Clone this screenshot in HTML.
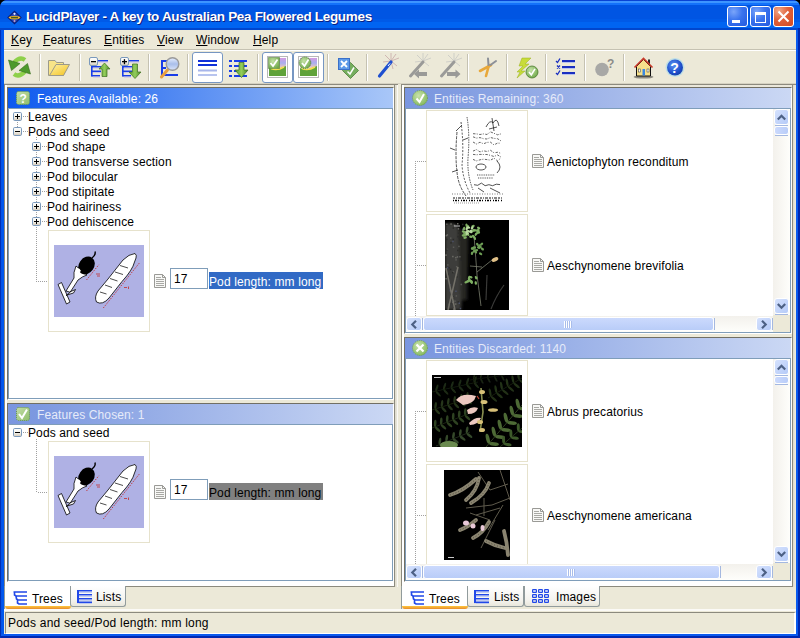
<!DOCTYPE html>
<html><head><meta charset="utf-8">
<style>
*{margin:0;padding:0;box-sizing:border-box}
html,body{width:800px;height:638px;overflow:hidden;background:#000}
body{position:relative;font-family:"Liberation Sans",sans-serif;font-size:12px;color:#000}
.a{position:absolute}
.t{position:absolute;white-space:nowrap;line-height:14px}
/* window */
#win{left:0;top:0;width:800px;height:638px;background:linear-gradient(to right,#0031C6 0,#0A4FE0 1px,#0058EE 2px,#0058EE 797px,#003DD7 799px);border-radius:8px 8px 0 0}
#title{left:0;top:0;width:800px;height:30px;border-radius:7px 7px 0 0;
 background:linear-gradient(to bottom,#0843D4 0,#0843D4 1px,#3D95FF 1px,#3D95FF 3px,#1372FA 3px,#1372FA 5px,#0055E3 5px,#0055E3 19px,#005AE8 19px,#005AE8 22px,#0064F2 22px,#0064F2 28px,#0046CE 28px)}
#client{left:4px;top:30px;width:792px;height:604px;background:#ECE9D8}
.ttl{left:26px;top:10px;font-size:13.5px;font-weight:bold;color:#fff;text-shadow:1px 1px 0 #0A1F80;letter-spacing:-0.32px}
.menu{top:33px;font-size:12px}
.menu u{text-decoration:underline;text-decoration-thickness:1px;text-underline-offset:1px}
.tr,.hdr .t,.tab,.menu{letter-spacing:.12px}
.stat{letter-spacing:.22px}
.sep{position:absolute;top:54px;width:1px;height:27px;background:#C5C2B2;box-shadow:1px 0 0 #fff}
.pbtn{position:absolute;top:52px;height:31px;border:1px solid #7696C2;border-radius:3px;background:#fff}
.wb{position:absolute;top:6px;width:21px;height:21px;border:1px solid #fff;border-radius:3px}
/* panels */
.hdr{position:absolute;height:20px;color:#fff;font-size:12px}
.hdr .t{top:4px;left:29px}
.hdr.ina .t{color:#E6EBF9}
.cont{position:absolute;background:#fff;border:1px solid #7F9DB9;}
.exp{position:absolute;width:9px;height:9px;border:1px solid #7A99BC;border-radius:2px;background:linear-gradient(#fff 0,#F4F3EE 50%,#C8C6B8 100%)}
.exp:before{content:"";position:absolute;left:1px;top:3px;width:5px;height:1px;background:#000}
.exp.p:after{content:"";position:absolute;left:3px;top:1px;width:1px;height:5px;background:#000}
.hd{position:absolute;height:1px;border-top:1px dotted #999}
.vd{position:absolute;width:1px;border-left:1px dotted #999}
</style></head><body>
<div id="win" class="a"></div>
<div id="title" class="a"></div>
<div id="client" class="a"></div>
<div class="t ttl">LucidPlayer - A key to Australian Pea Flowered Legumes</div>

<!-- menu -->
<div class="t menu" style="left:11px"><u>K</u>ey</div>
<div class="t menu" style="left:43px"><u>F</u>eatures</div>
<div class="t menu" style="left:104px"><u>E</u>ntities</div>
<div class="t menu" style="left:157px"><u>V</u>iew</div>
<div class="t menu" style="left:196px"><u>W</u>indow</div>
<div class="t menu" style="left:253px"><u>H</u>elp</div>
<div class="a" style="left:4px;top:49px;width:792px;height:1px;background:#C5C2B2"></div>
<div class="a" style="left:4px;top:50px;width:792px;height:1px;background:#fff"></div>
<div class="a" style="left:4px;top:83px;width:792px;height:1px;background:#D6D2C2"></div>

<!-- toolbar separators -->
<div class="sep" style="left:39px"></div>
<div class="sep" style="left:79px"></div>
<div class="sep" style="left:148px"></div>
<div class="sep" style="left:187px"></div>
<div class="sep" style="left:257px"></div>
<div class="sep" style="left:327px"></div>
<div class="sep" style="left:366px"></div>
<div class="sep" style="left:467px"></div>
<div class="sep" style="left:506px"></div>
<div class="sep" style="left:545px"></div>
<div class="sep" style="left:584px"></div>
<div class="sep" style="left:623px"></div>
<div class="pbtn" style="left:192px;width:31px"></div>
<div class="pbtn" style="left:262px;width:31px"></div>
<div class="pbtn" style="left:293px;width:31px"></div>

<svg class="a" style="left:0;top:0" width="800" height="90" viewBox="0 0 800 90">
<defs>
 <linearGradient id="gfold" x1="0" y1="0" x2="1" y2="1"><stop offset="0" stop-color="#FFF2A8"/><stop offset="1" stop-color="#F3C21C"/></linearGradient>
 <linearGradient id="glens" x1="0" y1="0" x2="0" y2="1"><stop offset="0" stop-color="#E8F0FF"/><stop offset=".5" stop-color="#A9BEEA"/><stop offset="1" stop-color="#DCE6FA"/></linearGradient>
 <radialGradient id="ghelp" cx=".4" cy=".35" r=".7"><stop offset="0" stop-color="#5C93F2"/><stop offset=".7" stop-color="#1E4FCB"/><stop offset="1" stop-color="#173FA8"/></radialGradient>
 <linearGradient id="gsky" x1="0" y1="0" x2="0" y2="1"><stop offset="0" stop-color="#D49BE0"/><stop offset=".5" stop-color="#A8AEF0"/><stop offset="1" stop-color="#F0C8B8"/></linearGradient>
 <radialGradient id="gchk" cx=".4" cy=".35" r=".7"><stop offset="0" stop-color="#C6E3A6"/><stop offset="1" stop-color="#6FA84A"/></radialGradient>
</defs>
<!-- refresh -->
<path d="M25,60 Q20,56 14,62.5" stroke="#8ED04A" stroke-width="4.2" fill="none"/>
<path d="M8.5,60 L20,63.5 L11.5,70.5 Z" fill="#4E9A2C" stroke="#356E1E" stroke-width=".6"/>
<path d="M14,74 Q19,78 25,71.5" stroke="#8ED04A" stroke-width="4.2" fill="none"/>
<path d="M30.5,74 L19,70.5 L27.5,63.5 Z" fill="#4E9A2C" stroke="#356E1E" stroke-width=".6"/>
<!-- folder -->
<path d="M48.5,75.5 L48.5,60.5 L55,60.5 L56.5,62.5 L63.5,62.5 L63.5,75.5 Z" fill="#F8E488" stroke="#9C9A8A" stroke-width="1"/>
<path d="M56,64.5 L69.5,64.5 L63.5,75.5 L49.5,75.5 Z" fill="url(#gfold)" stroke="#9C9A8A" stroke-width="1"/>
<!-- collapse -->
<defs><linearGradient id="garr" x1="0" y1="0" x2="1" y2="0"><stop offset="0" stop-color="#5E9E34"/><stop offset=".5" stop-color="#92CC5A"/><stop offset="1" stop-color="#4E8A2A"/></linearGradient></defs>
<g fill="#1A3EE8"><rect x="98" y="60" width="10" height="1.6"/><rect x="91" y="66" width="1.6" height="10"/><rect x="91" y="66" width="10" height="1.6"/><rect x="91" y="70.5" width="10" height="1.6"/><rect x="91" y="75" width="9" height="1.6"/></g><g fill="#C9C2E6"><rect x="98" y="61.6" width="10" height="1"/><rect x="93" y="67.6" width="8" height="1"/><rect x="93" y="72.1" width="8" height="1"/><rect x="93" y="76.6" width="7" height="1"/></g>
<rect x="89.5" y="57.5" width="8" height="8" rx="1.5" fill="url(#gexp)" stroke="#7A99BC"/>
<rect x="91" y="61" width="5" height="1.3" fill="#000"/>
<path d="M99,69 L104.5,63 L110,69 L107,69 L107,76.5 L102,76.5 L102,69 Z" fill="url(#garr)" stroke="#3C6E20" stroke-width=".7"/>
<!-- expand -->
<g fill="#1A3EE8"><rect x="129" y="60" width="10" height="1.6"/><rect x="122" y="66" width="1.6" height="10"/><rect x="122" y="66" width="10" height="1.6"/><rect x="122" y="70.5" width="10" height="1.6"/><rect x="122" y="75" width="9" height="1.6"/></g><g fill="#C9C2E6"><rect x="129" y="61.6" width="10" height="1"/><rect x="124" y="67.6" width="8" height="1"/><rect x="124" y="72.1" width="8" height="1"/><rect x="124" y="76.6" width="7" height="1"/></g>
<rect x="120.5" y="57.5" width="8" height="8" rx="1.5" fill="url(#gexp)" stroke="#7A99BC"/>
<rect x="122" y="61" width="5" height="1.3" fill="#000"/><rect x="123.8" y="59.2" width="1.3" height="5" fill="#000"/>
<path d="M132.5,64 L137.5,64 L137.5,72 L141,72 L135,78.5 L129,72 L132.5,72 Z" fill="url(#garr)" stroke="#3C6E20" stroke-width=".7"/>
<!-- search -->
<g fill="#1A3EE8"><rect x="161" y="60" width="2" height="16"/><rect x="161" y="60" width="7" height="2"/><rect x="161" y="67" width="5" height="2"/><rect x="161" y="74" width="17" height="2"/></g>
<line x1="161.5" y1="77" x2="167.5" y2="70" stroke="#E8A040" stroke-width="3" stroke-linecap="round"/>
<circle cx="172.5" cy="64" r="6.3" fill="url(#glens)" stroke="#9A9A9A" stroke-width="1.4"/>
<!-- lines icon (pressed) -->
<rect x="198" y="60" width="19" height="2" fill="#1030D8"/><rect x="198" y="64" width="19" height="2" fill="#1030D8"/>
<rect x="198" y="69.5" width="19" height="2" fill="#A8B6EA"/><rect x="198" y="74" width="19" height="2" fill="#B8C4EE"/>
<!-- dotted list with arrow -->
<g fill="#1A3EE8">
<rect x="229" y="60" width="3" height="2"/><rect x="234" y="60" width="13" height="2"/>
<rect x="229" y="65" width="3" height="2"/><rect x="234" y="65" width="13" height="2"/>
<rect x="229" y="70" width="3" height="2"/><rect x="234" y="70" width="13" height="2"/>
<rect x="229" y="75" width="3" height="2"/><rect x="234" y="75" width="13" height="2"/>
</g>
<path d="M239,62.5 L244,62.5 L244,70 L248,70 L241.5,77.5 L235,70 L239,70 Z" fill="url(#garr)" stroke="#3C6E20" stroke-width=".7"/>
<!-- image check 1 -->
<rect x="267.5" y="56.5" width="20" height="21" fill="#fff" stroke="#B8B8B8"/>
<rect x="269" y="58" width="17" height="10" fill="url(#gsky)"/>
<path d="M269,68 Q276,71 286,66 L286,76 L269,76 Z" fill="#5FA23A"/>
<path d="M271,68.5 Q277,71 284,67" stroke="#F5E050" stroke-width="1.6" fill="none"/>
<rect x="268.5" y="57.5" width="11" height="11" fill="url(#gchk)" stroke="#4C7A30" stroke-width="1" stroke-dasharray="1 1"/>
<path d="M270.5,63 L273,66 L277.5,59.5" stroke="#fff" stroke-width="1.8" fill="none"/>
<!-- image check 2 -->
<rect x="298.5" y="56.5" width="20" height="21" fill="#fff" stroke="#B8B8B8"/>
<rect x="300" y="58" width="17" height="10" fill="url(#gsky)"/>
<path d="M300,68 Q307,71 317,66 L317,76 L300,76 Z" fill="#5FA23A"/>
<path d="M302,68.5 Q308,71 315,67" stroke="#F5E050" stroke-width="1.6" fill="none"/>
<circle cx="305" cy="62.8" r="5.8" fill="url(#gchk)" stroke="#4C7A30" stroke-width="1" stroke-dasharray="1 1"/>
<path d="M302,63 L304.5,66 L308.5,59.5" stroke="#fff" stroke-width="1.8" fill="none"/>
<!-- swap -->
<path d="M350.5,62.5 L358.5,70.5 L350.5,78.5 L342.5,70.5 Z" fill="#76AE5E" stroke="#4E7E3A" stroke-width=".8"/>
<path d="M347.5,71.5 L350,74 L354,67.5" stroke="#fff" stroke-width="1.5" fill="none"/>
<rect x="338.5" y="58.5" width="11" height="11" fill="#5D9AE8" stroke="#3A70C8"/>
<path d="M341,61 L347,67 M347,61 L341,67" stroke="#fff" stroke-width="1.8"/>
<!-- wand -->
<g stroke="#C8A8A8" stroke-width=".8"><path d="M391,61 L399,58 M391,61 L397,66 M391,61 L393,69 M391,61 L385,55 M391,61 L391,53 M391,61 L396,54 M391,61 L383,62"/></g>
<line x1="379.5" y1="76" x2="391" y2="62" stroke="#1F50D0" stroke-width="3.2" stroke-linecap="round"/>
<line x1="388" y1="66" x2="390" y2="63.5" stroke="#fff" stroke-width="1"/>
<!-- gray wand left -->
<g stroke="#C8C8C4" stroke-width=".8"><path d="M423,61 L431,58 M423,61 L429,66 M423,61 L417,55 M423,61 L423,53 M423,61 L428,54 M423,61 L415,62"/></g>
<line x1="410.5" y1="76" x2="423" y2="62" stroke="#9A9A98" stroke-width="3" stroke-linecap="round"/>
<path d="M414,74 L419,69.5 L419,72 L427,72 L427,76 L419,76 L419,78.5 Z" fill="#9A9A98"/>
<!-- gray wand right -->
<g stroke="#C8C8C4" stroke-width=".8"><path d="M454,61 L462,58 M454,61 L460,66 M454,61 L448,55 M454,61 L454,53 M454,61 L459,54 M454,61 L446,62"/></g>
<line x1="441.5" y1="76" x2="454" y2="62" stroke="#9A9A98" stroke-width="3" stroke-linecap="round"/>
<path d="M460.5,74 L455.5,69.5 L455.5,72 L447,72 L447,76 L455.5,76 L455.5,78.5 Z" fill="#9A9A98"/>
<!-- pliers -->
<path d="M480,71 L491,65" stroke="#E8A83A" stroke-width="2.6" stroke-linecap="round"/>
<path d="M486,76 L489,65" stroke="#E8A83A" stroke-width="2.6" stroke-linecap="round"/>
<path d="M488.5,65 L488,58.5 M490.5,65 L496,61" stroke="#8C9098" stroke-width="2" stroke-linecap="round"/>
<!-- lightning -->
<path d="M522,58 L531,58 L525,64 L529,64 L521,71 L525,71 L517,78 L520,72 L517,72 L523,66 L519,66 Z" fill="#C8DC3A" stroke="#9AB020" stroke-width=".5"/>
<circle cx="532" cy="72" r="6" fill="url(#gchk)" stroke="#4C7A30" stroke-width=".8"/>
<path d="M529,72 L531.3,74.8 L535,68.8" stroke="#fff" stroke-width="1.6" fill="none"/>
<!-- checklist -->
<g stroke="#1A2FC0" stroke-width="1.3" fill="none"><path d="M556,61 L557.5,62.5 L560,58.5"/><path d="M556,73 L557.5,74.5 L560,70.5"/><path d="M557,65.5 L560,68.5 M560,65.5 L557,68.5"/></g>
<g fill="#1A2FC0"><rect x="562" y="60" width="13" height="2"/><rect x="562" y="66" width="13" height="2"/><rect x="562" y="72" width="13" height="2"/></g>
<g fill="#B8C2EE"><rect x="562" y="62" width="13" height="1"/><rect x="562" y="68" width="13" height="1"/><rect x="562" y="74" width="13" height="1"/></g>
<!-- gray ball -->
<circle cx="602" cy="69.5" r="6.8" fill="#A8A8A6"/>
<text x="607" y="67.5" font-family="Liberation Sans" font-weight="bold" font-size="12" fill="#8C8C8A">?</text>
<!-- house -->
<ellipse cx="643.5" cy="77" rx="10" ry="1.6" fill="#8C8A80"/>
<rect x="648" y="59.5" width="2" height="5" fill="#222"/>
<path d="M636.5,66.5 L643.5,59.5 L650.5,66.5 L650.5,76 L636.5,76 Z" fill="#F6E08C" stroke="#111" stroke-width="1"/>
<path d="M634.5,67.5 L643.5,58.5 L652.5,67.5" stroke="#C83A2A" stroke-width="1.6" fill="none"/>
<rect x="642.5" y="69" width="2.5" height="6.5" fill="#3A88E0"/>
<rect x="638.5" y="69" width="2" height="3" fill="#fff" stroke="#333" stroke-width=".5"/>
<rect x="647" y="69" width="2" height="3" fill="#fff" stroke="#333" stroke-width=".5"/>
<!-- help -->
<circle cx="675" cy="67.5" r="9.5" fill="#BFE0E6"/>
<circle cx="675" cy="67.5" r="8" fill="url(#ghelp)"/>
<text x="670.2" y="73" font-family="Liberation Sans" font-weight="bold" font-size="14" fill="#fff">?</text>
</svg>

<!-- window buttons -->
<div class="wb" style="left:727px;background:radial-gradient(circle at 30% 25%,#7AA5FA,#3A73EE 45%,#2259DE 100%)"></div>
<div class="a" style="left:732px;top:20px;width:8px;height:3px;background:#fff"></div>
<div class="wb" style="left:750px;background:radial-gradient(circle at 30% 25%,#7AA5FA,#3A73EE 45%,#2259DE 100%)"></div>
<div class="a" style="left:755px;top:12px;width:11px;height:11px;border:1px solid #fff;border-top-width:3px"></div>
<div class="wb" style="left:773px;background:radial-gradient(circle at 25% 20%,#F0A888,#E0603A 45%,#D24A22 100%)"></div>
<svg class="a" style="left:773px;top:6px" width="21" height="21" viewBox="0 0 21 21"><path d="M5.5,5.5 L15.5,15.5 M15.5,5.5 L5.5,15.5" stroke="#fff" stroke-width="2"/></svg>
<svg class="a" style="left:6px;top:9px" width="18" height="18" viewBox="0 0 18 18">
<path d="M8.5,1.5 L15.8,8.5 L8.5,15.5 L1.2,8.5 Z" fill="#0A1E78"/>
<path d="M8.5,3 L14,8.5 L8.5,14 L3,8.5 Z" fill="#2442B8"/>
<path d="M2.5,8.5 Q4,6.8 8.5,6.8 Q13,6.8 14.5,8.5 Q13,10.4 8.5,10.4 Q4,10.4 2.5,8.5 Z" fill="#F4B82A"/>
<rect x="5" y="7.8" width="7" height="1.6" fill="#4A5A20"/>
<circle cx="8.5" cy="4.8" r="1.1" fill="#E8E8FF"/>
<circle cx="8.5" cy="12" r="1" fill="#C8A0C0"/>
</svg>

<!-- PANEL FRAMES -->
<div class="a" style="left:4px;top:84px;width:391px;height:503px;border:1px solid #8C8A7E;background:#fff"></div>
<div class="a" style="left:7px;top:85px;width:387px;height:2px;background:#EAE7DA"></div>
<div class="a" style="left:395px;top:84px;width:3px;height:1px;background:#8C8A7E"></div>
<div class="a" style="left:395px;top:85px;width:2px;height:502px;background:linear-gradient(to right,#DDDACB,#E9E7DB)"></div>
<div class="a" style="left:397px;top:85px;width:1px;height:502px;background:#FAF9F4"></div>
<div class="a" style="left:401px;top:84px;width:392px;height:503px;border:1px solid #8C8A7E;background:#fff"></div>
<div class="a" style="left:404px;top:85px;width:388px;height:2px;background:#EAE7DA"></div>
<div class="a" style="left:793px;top:84px;width:3px;height:1px;background:#8C8A7E"></div>
<div class="a" style="left:793px;top:85px;width:2px;height:502px;background:linear-gradient(to right,#DDDACB,#E9E7DB)"></div>
<div class="a" style="left:7px;top:87px;width:387px;height:495px;background:#ECE9D8"></div>
<div class="a" style="left:404px;top:87px;width:388px;height:495px;background:#ECE9D8"></div>
<div class="a" style="left:7px;top:87px;width:387px;height:313px;border-left:1px solid #716F64;border-top:1px solid #716F64;border-right:1px solid #fff;border-bottom:1px solid #fff"></div>
<div class="hdr" style="left:8px;top:88px;width:385px;background:linear-gradient(to right,#0B58EE 0,#1A62EF 8%,#A9C7F8 100%)"><div class="t">Features Available: 26</div></div>
<div class="cont" style="left:8px;top:108px;width:385px;height:291px"></div>
<div class="a" style="left:7px;top:403px;width:387px;height:179px;border-left:1px solid #716F64;border-top:1px solid #716F64;border-right:1px solid #fff;border-bottom:1px solid #fff"></div>
<div class="hdr ina" style="left:8px;top:404px;width:385px;background:linear-gradient(to right,#7A96E0 0,#7D99E0 8%,#CBD8F4 100%)"><div class="t">Features Chosen: 1</div></div>
<div class="cont" style="left:8px;top:424px;width:385px;height:157px"></div>
<div class="a" style="left:404px;top:87px;width:388px;height:247px;border-left:1px solid #716F64;border-top:1px solid #716F64;border-right:1px solid #fff;border-bottom:1px solid #fff"></div>
<div class="hdr ina" style="left:405px;top:88px;width:386px;background:linear-gradient(to right,#7A96E0 0,#7D99E0 8%,#CBD8F4 100%)"><div class="t">Entities Remaining: 360</div></div>
<div class="cont" style="left:405px;top:108px;width:386px;height:225px"></div>
<div class="a" style="left:404px;top:337px;width:388px;height:245px;border-left:1px solid #716F64;border-top:1px solid #716F64;border-right:1px solid #fff;border-bottom:1px solid #fff"></div>
<div class="hdr ina" style="left:405px;top:338px;width:386px;background:linear-gradient(to right,#7A96E0 0,#7D99E0 8%,#CBD8F4 100%)"><div class="t">Entities Discarded: 1140</div></div>
<div class="cont" style="left:405px;top:358px;width:386px;height:223px"></div>
<!-- tab areas -->
<!-- TABS -->
<div class="a" style="left:4px;top:586px;width:1px;height:23px;background:#919B9C"></div>
<div class="a" style="left:401px;top:586px;width:1px;height:23px;background:#919B9C"></div>
<svg class="a" style="left:0;top:0" width="800" height="638" viewBox="0 0 800 638"><defs><linearGradient id="gexp" x1="0" y1="0" x2="0" y2="1"><stop offset="0" stop-color="#fff"/><stop offset=".55" stop-color="#F2F1EA"/><stop offset="1" stop-color="#D3C7B6"/></linearGradient><linearGradient id="hgq" x1="0" y1="0" x2="1" y2="1"><stop offset="0" stop-color="#C4DEA8"/><stop offset="1" stop-color="#8FBE6A"/></linearGradient><radialGradient id="hgc" cx=".4" cy=".35" r=".75"><stop offset="0" stop-color="#C8E2AA"/><stop offset=".8" stop-color="#8DBE68"/><stop offset="1" stop-color="#6EA448"/></radialGradient><linearGradient id="gsbv" x1="0" y1="0" x2="1" y2="0"><stop offset="0" stop-color="#F3F1EC"/><stop offset="1" stop-color="#FEFEFB"/></linearGradient><linearGradient id="gsbh" x1="0" y1="0" x2="0" y2="1"><stop offset="0" stop-color="#F3F1EC"/><stop offset="1" stop-color="#FEFEFB"/></linearGradient><linearGradient id="gbtn" x1="0" y1="0" x2="1" y2="1"><stop offset="0" stop-color="#D6E2FD"/><stop offset="1" stop-color="#B4CAF8"/></linearGradient><linearGradient id="gthh" x1="0" y1="0" x2="0" y2="1"><stop offset="0" stop-color="#CCDAFD"/><stop offset="1" stop-color="#B8CCF8"/></linearGradient><linearGradient id="gthv" x1="0" y1="0" x2="1" y2="0"><stop offset="0" stop-color="#CCDAFD"/><stop offset="1" stop-color="#B8CCF8"/></linearGradient></defs>
<rect x="16.5" y="91.5" width="13" height="13" rx="2" fill="url(#hgq)" stroke="#6D9A4A" stroke-dasharray="1 1"/><text x="19.5" y="102.5" font-family="Liberation Sans" font-weight="bold" font-size="12" fill="#fff">?</text><rect x="16.5" y="407.5" width="13" height="13" rx="2" fill="url(#hgq)" stroke="#6D9A4A" stroke-dasharray="1 1"/><path d="M19,414 L22,418 L27,409.5" stroke="#fff" stroke-width="2" fill="none"/><circle cx="420" cy="98" r="7.5" fill="url(#hgc)" stroke="#6D9A4A" stroke-width=".8" stroke-dasharray="1 1"/><path d="M416.5,98.5 L419.5,102 L424,94" stroke="#fff" stroke-width="2" fill="none"/><circle cx="420" cy="348" r="7.5" fill="url(#hgc)" stroke="#6D9A4A" stroke-width=".8" stroke-dasharray="1 1"/><path d="M416.5,344.5 L423.5,351.5 M423.5,344.5 L416.5,351.5" stroke="#fff" stroke-width="2.2"/>
<rect x="13.5" y="112.5" width="8" height="8" rx="1.2" fill="url(#gexp)" stroke="#7A99BC"/><rect x="15" y="116" width="5" height="1" fill="#000"/><rect x="17" y="114" width="1" height="5" fill="#000"/>
<rect x="13.5" y="127.5" width="8" height="8" rx="1.2" fill="url(#gexp)" stroke="#7A99BC"/><rect x="15" y="131" width="5" height="1" fill="#000"/>
<rect x="32.5" y="142.5" width="8" height="8" rx="1.2" fill="url(#gexp)" stroke="#7A99BC"/><rect x="34" y="146" width="5" height="1" fill="#000"/><rect x="36" y="144" width="1" height="5" fill="#000"/>
<rect x="32.5" y="157.5" width="8" height="8" rx="1.2" fill="url(#gexp)" stroke="#7A99BC"/><rect x="34" y="161" width="5" height="1" fill="#000"/><rect x="36" y="159" width="1" height="5" fill="#000"/>
<rect x="32.5" y="172.5" width="8" height="8" rx="1.2" fill="url(#gexp)" stroke="#7A99BC"/><rect x="34" y="176" width="5" height="1" fill="#000"/><rect x="36" y="174" width="1" height="5" fill="#000"/>
<rect x="32.5" y="187.5" width="8" height="8" rx="1.2" fill="url(#gexp)" stroke="#7A99BC"/><rect x="34" y="191" width="5" height="1" fill="#000"/><rect x="36" y="189" width="1" height="5" fill="#000"/>
<rect x="32.5" y="202.5" width="8" height="8" rx="1.2" fill="url(#gexp)" stroke="#7A99BC"/><rect x="34" y="206" width="5" height="1" fill="#000"/><rect x="36" y="204" width="1" height="5" fill="#000"/>
<rect x="32.5" y="217.5" width="8" height="8" rx="1.2" fill="url(#gexp)" stroke="#7A99BC"/><rect x="34" y="221" width="5" height="1" fill="#000"/><rect x="36" y="219" width="1" height="5" fill="#000"/>
<rect x="13.5" y="428.5" width="8" height="8" rx="1.2" fill="url(#gexp)" stroke="#7A99BC"/><rect x="15" y="432" width="5" height="1" fill="#000"/>
<g fill="#A0A0A0"><rect x="23" y="116" width="1" height="1"/><rect x="25" y="116" width="1" height="1"/><rect x="27" y="116" width="1" height="1"/><rect x="23" y="131" width="1" height="1"/><rect x="25" y="131" width="1" height="1"/><rect x="27" y="131" width="1" height="1"/><rect x="42" y="146" width="1" height="1"/><rect x="44" y="146" width="1" height="1"/><rect x="46" y="146" width="1" height="1"/><rect x="42" y="161" width="1" height="1"/><rect x="44" y="161" width="1" height="1"/><rect x="46" y="161" width="1" height="1"/><rect x="42" y="176" width="1" height="1"/><rect x="44" y="176" width="1" height="1"/><rect x="46" y="176" width="1" height="1"/><rect x="42" y="191" width="1" height="1"/><rect x="44" y="191" width="1" height="1"/><rect x="46" y="191" width="1" height="1"/><rect x="42" y="206" width="1" height="1"/><rect x="44" y="206" width="1" height="1"/><rect x="46" y="206" width="1" height="1"/><rect x="42" y="221" width="1" height="1"/><rect x="44" y="221" width="1" height="1"/><rect x="46" y="221" width="1" height="1"/><rect x="17" y="122" width="1" height="1"/><rect x="17" y="124" width="1" height="1"/><rect x="17" y="126" width="1" height="1"/><rect x="36" y="137" width="1" height="1"/><rect x="36" y="139" width="1" height="1"/><rect x="36" y="152" width="1" height="1"/><rect x="36" y="154" width="1" height="1"/><rect x="36" y="156" width="1" height="1"/><rect x="36" y="167" width="1" height="1"/><rect x="36" y="169" width="1" height="1"/><rect x="36" y="171" width="1" height="1"/><rect x="36" y="182" width="1" height="1"/><rect x="36" y="184" width="1" height="1"/><rect x="36" y="186" width="1" height="1"/><rect x="36" y="197" width="1" height="1"/><rect x="36" y="199" width="1" height="1"/><rect x="36" y="201" width="1" height="1"/><rect x="36" y="212" width="1" height="1"/><rect x="36" y="214" width="1" height="1"/><rect x="36" y="216" width="1" height="1"/><rect x="36" y="227" width="1" height="1"/><rect x="36" y="229" width="1" height="1"/><rect x="36" y="231" width="1" height="1"/><rect x="36" y="233" width="1" height="1"/><rect x="36" y="235" width="1" height="1"/><rect x="36" y="237" width="1" height="1"/><rect x="36" y="239" width="1" height="1"/><rect x="36" y="241" width="1" height="1"/><rect x="36" y="243" width="1" height="1"/><rect x="36" y="245" width="1" height="1"/><rect x="36" y="247" width="1" height="1"/><rect x="36" y="249" width="1" height="1"/><rect x="36" y="251" width="1" height="1"/><rect x="36" y="253" width="1" height="1"/><rect x="36" y="255" width="1" height="1"/><rect x="36" y="257" width="1" height="1"/><rect x="36" y="259" width="1" height="1"/><rect x="36" y="261" width="1" height="1"/><rect x="36" y="263" width="1" height="1"/><rect x="36" y="265" width="1" height="1"/><rect x="36" y="267" width="1" height="1"/><rect x="36" y="269" width="1" height="1"/><rect x="36" y="271" width="1" height="1"/><rect x="36" y="273" width="1" height="1"/><rect x="36" y="275" width="1" height="1"/><rect x="36" y="277" width="1" height="1"/><rect x="36" y="279" width="1" height="1"/><rect x="36" y="281" width="1" height="1"/><rect x="38" y="281" width="1" height="1"/><rect x="40" y="281" width="1" height="1"/><rect x="42" y="281" width="1" height="1"/><rect x="44" y="281" width="1" height="1"/><rect x="46" y="281" width="1" height="1"/><rect x="23" y="432" width="1" height="1"/><rect x="25" y="432" width="1" height="1"/><rect x="27" y="432" width="1" height="1"/><rect x="36" y="439" width="1" height="1"/><rect x="36" y="441" width="1" height="1"/><rect x="36" y="443" width="1" height="1"/><rect x="36" y="445" width="1" height="1"/><rect x="36" y="447" width="1" height="1"/><rect x="36" y="449" width="1" height="1"/><rect x="36" y="451" width="1" height="1"/><rect x="36" y="453" width="1" height="1"/><rect x="36" y="455" width="1" height="1"/><rect x="36" y="457" width="1" height="1"/><rect x="36" y="459" width="1" height="1"/><rect x="36" y="461" width="1" height="1"/><rect x="36" y="463" width="1" height="1"/><rect x="36" y="465" width="1" height="1"/><rect x="36" y="467" width="1" height="1"/><rect x="36" y="469" width="1" height="1"/><rect x="36" y="471" width="1" height="1"/><rect x="36" y="473" width="1" height="1"/><rect x="36" y="475" width="1" height="1"/><rect x="36" y="477" width="1" height="1"/><rect x="36" y="479" width="1" height="1"/><rect x="36" y="481" width="1" height="1"/><rect x="36" y="483" width="1" height="1"/><rect x="36" y="485" width="1" height="1"/><rect x="36" y="487" width="1" height="1"/><rect x="36" y="489" width="1" height="1"/><rect x="36" y="491" width="1" height="1"/><rect x="38" y="492" width="1" height="1"/><rect x="40" y="492" width="1" height="1"/><rect x="42" y="492" width="1" height="1"/><rect x="44" y="492" width="1" height="1"/><rect x="46" y="492" width="1" height="1"/><rect x="415" y="161" width="1" height="1"/><rect x="415" y="163" width="1" height="1"/><rect x="415" y="165" width="1" height="1"/><rect x="415" y="167" width="1" height="1"/><rect x="415" y="169" width="1" height="1"/><rect x="415" y="171" width="1" height="1"/><rect x="415" y="173" width="1" height="1"/><rect x="415" y="175" width="1" height="1"/><rect x="415" y="177" width="1" height="1"/><rect x="415" y="179" width="1" height="1"/><rect x="415" y="181" width="1" height="1"/><rect x="415" y="183" width="1" height="1"/><rect x="415" y="185" width="1" height="1"/><rect x="415" y="187" width="1" height="1"/><rect x="415" y="189" width="1" height="1"/><rect x="415" y="191" width="1" height="1"/><rect x="415" y="193" width="1" height="1"/><rect x="415" y="195" width="1" height="1"/><rect x="415" y="197" width="1" height="1"/><rect x="415" y="199" width="1" height="1"/><rect x="415" y="201" width="1" height="1"/><rect x="415" y="203" width="1" height="1"/><rect x="415" y="205" width="1" height="1"/><rect x="415" y="207" width="1" height="1"/><rect x="415" y="209" width="1" height="1"/><rect x="415" y="211" width="1" height="1"/><rect x="415" y="213" width="1" height="1"/><rect x="415" y="215" width="1" height="1"/><rect x="415" y="217" width="1" height="1"/><rect x="415" y="219" width="1" height="1"/><rect x="415" y="221" width="1" height="1"/><rect x="415" y="223" width="1" height="1"/><rect x="415" y="225" width="1" height="1"/><rect x="415" y="227" width="1" height="1"/><rect x="415" y="229" width="1" height="1"/><rect x="415" y="231" width="1" height="1"/><rect x="415" y="233" width="1" height="1"/><rect x="415" y="235" width="1" height="1"/><rect x="415" y="237" width="1" height="1"/><rect x="415" y="239" width="1" height="1"/><rect x="415" y="241" width="1" height="1"/><rect x="415" y="243" width="1" height="1"/><rect x="415" y="245" width="1" height="1"/><rect x="415" y="247" width="1" height="1"/><rect x="415" y="249" width="1" height="1"/><rect x="415" y="251" width="1" height="1"/><rect x="415" y="253" width="1" height="1"/><rect x="415" y="255" width="1" height="1"/><rect x="415" y="257" width="1" height="1"/><rect x="415" y="259" width="1" height="1"/><rect x="415" y="261" width="1" height="1"/><rect x="415" y="263" width="1" height="1"/><rect x="415" y="265" width="1" height="1"/><rect x="415" y="267" width="1" height="1"/><rect x="415" y="269" width="1" height="1"/><rect x="415" y="271" width="1" height="1"/><rect x="415" y="273" width="1" height="1"/><rect x="415" y="275" width="1" height="1"/><rect x="415" y="277" width="1" height="1"/><rect x="415" y="279" width="1" height="1"/><rect x="415" y="281" width="1" height="1"/><rect x="415" y="283" width="1" height="1"/><rect x="415" y="285" width="1" height="1"/><rect x="415" y="287" width="1" height="1"/><rect x="415" y="289" width="1" height="1"/><rect x="415" y="291" width="1" height="1"/><rect x="415" y="293" width="1" height="1"/><rect x="415" y="295" width="1" height="1"/><rect x="415" y="297" width="1" height="1"/><rect x="415" y="299" width="1" height="1"/><rect x="415" y="301" width="1" height="1"/><rect x="415" y="303" width="1" height="1"/><rect x="415" y="305" width="1" height="1"/><rect x="415" y="307" width="1" height="1"/><rect x="415" y="309" width="1" height="1"/><rect x="415" y="311" width="1" height="1"/><rect x="415" y="313" width="1" height="1"/><rect x="415" y="315" width="1" height="1"/><rect x="417" y="161" width="1" height="1"/><rect x="419" y="161" width="1" height="1"/><rect x="421" y="161" width="1" height="1"/><rect x="423" y="161" width="1" height="1"/><rect x="425" y="161" width="1" height="1"/><rect x="417" y="265" width="1" height="1"/><rect x="419" y="265" width="1" height="1"/><rect x="421" y="265" width="1" height="1"/><rect x="423" y="265" width="1" height="1"/><rect x="425" y="265" width="1" height="1"/><rect x="415" y="411" width="1" height="1"/><rect x="415" y="413" width="1" height="1"/><rect x="415" y="415" width="1" height="1"/><rect x="415" y="417" width="1" height="1"/><rect x="415" y="419" width="1" height="1"/><rect x="415" y="421" width="1" height="1"/><rect x="415" y="423" width="1" height="1"/><rect x="415" y="425" width="1" height="1"/><rect x="415" y="427" width="1" height="1"/><rect x="415" y="429" width="1" height="1"/><rect x="415" y="431" width="1" height="1"/><rect x="415" y="433" width="1" height="1"/><rect x="415" y="435" width="1" height="1"/><rect x="415" y="437" width="1" height="1"/><rect x="415" y="439" width="1" height="1"/><rect x="415" y="441" width="1" height="1"/><rect x="415" y="443" width="1" height="1"/><rect x="415" y="445" width="1" height="1"/><rect x="415" y="447" width="1" height="1"/><rect x="415" y="449" width="1" height="1"/><rect x="415" y="451" width="1" height="1"/><rect x="415" y="453" width="1" height="1"/><rect x="415" y="455" width="1" height="1"/><rect x="415" y="457" width="1" height="1"/><rect x="415" y="459" width="1" height="1"/><rect x="415" y="461" width="1" height="1"/><rect x="415" y="463" width="1" height="1"/><rect x="415" y="465" width="1" height="1"/><rect x="415" y="467" width="1" height="1"/><rect x="415" y="469" width="1" height="1"/><rect x="415" y="471" width="1" height="1"/><rect x="415" y="473" width="1" height="1"/><rect x="415" y="475" width="1" height="1"/><rect x="415" y="477" width="1" height="1"/><rect x="415" y="479" width="1" height="1"/><rect x="415" y="481" width="1" height="1"/><rect x="415" y="483" width="1" height="1"/><rect x="415" y="485" width="1" height="1"/><rect x="415" y="487" width="1" height="1"/><rect x="415" y="489" width="1" height="1"/><rect x="415" y="491" width="1" height="1"/><rect x="415" y="493" width="1" height="1"/><rect x="415" y="495" width="1" height="1"/><rect x="415" y="497" width="1" height="1"/><rect x="415" y="499" width="1" height="1"/><rect x="415" y="501" width="1" height="1"/><rect x="415" y="503" width="1" height="1"/><rect x="415" y="505" width="1" height="1"/><rect x="415" y="507" width="1" height="1"/><rect x="415" y="509" width="1" height="1"/><rect x="415" y="511" width="1" height="1"/><rect x="415" y="513" width="1" height="1"/><rect x="415" y="515" width="1" height="1"/><rect x="415" y="517" width="1" height="1"/><rect x="415" y="519" width="1" height="1"/><rect x="415" y="521" width="1" height="1"/><rect x="415" y="523" width="1" height="1"/><rect x="415" y="525" width="1" height="1"/><rect x="415" y="527" width="1" height="1"/><rect x="415" y="529" width="1" height="1"/><rect x="415" y="531" width="1" height="1"/><rect x="415" y="533" width="1" height="1"/><rect x="415" y="535" width="1" height="1"/><rect x="415" y="537" width="1" height="1"/><rect x="415" y="539" width="1" height="1"/><rect x="415" y="541" width="1" height="1"/><rect x="415" y="543" width="1" height="1"/><rect x="415" y="545" width="1" height="1"/><rect x="415" y="547" width="1" height="1"/><rect x="415" y="549" width="1" height="1"/><rect x="415" y="551" width="1" height="1"/><rect x="415" y="553" width="1" height="1"/><rect x="415" y="555" width="1" height="1"/><rect x="415" y="557" width="1" height="1"/><rect x="415" y="559" width="1" height="1"/><rect x="415" y="561" width="1" height="1"/><rect x="415" y="563" width="1" height="1"/><rect x="417" y="411" width="1" height="1"/><rect x="419" y="411" width="1" height="1"/><rect x="421" y="411" width="1" height="1"/><rect x="423" y="411" width="1" height="1"/><rect x="425" y="411" width="1" height="1"/><rect x="417" y="515" width="1" height="1"/><rect x="419" y="515" width="1" height="1"/><rect x="421" y="515" width="1" height="1"/><rect x="423" y="515" width="1" height="1"/><rect x="425" y="515" width="1" height="1"/></g>
<rect x="48.5" y="230.5" width="101" height="101" fill="#fff" stroke="#E6E2CC"/>
<g transform="translate(54,245)"><rect x="0" y="0" width="90" height="72" fill="#AFB1E4"/>
<path d="M4,39.5 L7.5,37.5 L16,57 L12.5,59 Z" fill="#fff" stroke="#000" stroke-width=".8"/>
<path d="M22,21 Q19,28 20,33 L12,46 L15.5,47 L21.5,44.5 L19.5,48 L13,50 L12,50.5 L16,47.5 L24,35 Q29,31 33,30 Z" fill="#fff" stroke="#000" stroke-width=".8"/>
<ellipse cx="32.5" cy="20.5" rx="7.6" ry="9.6" transform="rotate(35 32.5 20.5)" fill="#000"/>
<path d="M38,13 Q42,10 41,6.5" stroke="#000" stroke-width="1.4" fill="none"/>
<path d="M23,24 Q25,22 27,26 Q25,28 23,27 Z" fill="#fff"/>
<path d="M32.5,35 L45,19.5" stroke="#C03030" stroke-width=".9" stroke-dasharray="1.5 1.3"/>
<path d="M42,29 L46,29 M43,31 L46,31" stroke="#C03030" stroke-width=".8"/>
<path d="M42.5,57 Q40,52 44,46 L54,34 L69,15 Q75,9 81,8.5 Q83,10 82,13 L80.5,17 Q78.5,25 68,36.5 L55,53 Q48.5,60.5 42.5,57 Z" fill="#fff" stroke="#000" stroke-width=".8"/>
<g stroke="#000" stroke-width=".7"><path d="M46,47 L52.5,49"/><path d="M51,40 L58,42.5"/><path d="M56,33.5 L63.5,36"/><path d="M61,27 L69,29.5"/><path d="M66,20.5 L74,23"/></g>
<path d="M49.3,63 L85.6,17.7" stroke="#C03030" stroke-width=".9" stroke-dasharray="1.5 1.3"/>
<path d="M70,42.5 L73,42.5 M74.5,41.5 L74.5,44" stroke="#C03030" stroke-width=".8"/>
</g>
<path d="M154.5,274.5 L162.5,274.5 L165.5,277.5 L165.5,287.5 L154.5,287.5 Z" fill="#F8F8F6" stroke="#9A9A96"/><path d="M162.5,274.5 L162.5,277.5 L165.5,277.5" fill="none" stroke="#9A9A96"/><rect x="156" y="277" width="5" height="1" fill="#A8A8A4"/><rect x="156" y="279" width="8" height="1" fill="#A8A8A4"/><rect x="156" y="281" width="8" height="1" fill="#A8A8A4"/><rect x="156" y="283" width="8" height="1" fill="#A8A8A4"/><rect x="156" y="285" width="8" height="1" fill="#A8A8A4"/>
<rect x="48.5" y="441.5" width="101" height="101" fill="#fff" stroke="#E6E2CC"/>
<g transform="translate(54,456)"><rect x="0" y="0" width="90" height="72" fill="#AFB1E4"/>
<path d="M4,39.5 L7.5,37.5 L16,57 L12.5,59 Z" fill="#fff" stroke="#000" stroke-width=".8"/>
<path d="M22,21 Q19,28 20,33 L12,46 L15.5,47 L21.5,44.5 L19.5,48 L13,50 L12,50.5 L16,47.5 L24,35 Q29,31 33,30 Z" fill="#fff" stroke="#000" stroke-width=".8"/>
<ellipse cx="32.5" cy="20.5" rx="7.6" ry="9.6" transform="rotate(35 32.5 20.5)" fill="#000"/>
<path d="M38,13 Q42,10 41,6.5" stroke="#000" stroke-width="1.4" fill="none"/>
<path d="M23,24 Q25,22 27,26 Q25,28 23,27 Z" fill="#fff"/>
<path d="M32.5,35 L45,19.5" stroke="#C03030" stroke-width=".9" stroke-dasharray="1.5 1.3"/>
<path d="M42,29 L46,29 M43,31 L46,31" stroke="#C03030" stroke-width=".8"/>
<path d="M42.5,57 Q40,52 44,46 L54,34 L69,15 Q75,9 81,8.5 Q83,10 82,13 L80.5,17 Q78.5,25 68,36.5 L55,53 Q48.5,60.5 42.5,57 Z" fill="#fff" stroke="#000" stroke-width=".8"/>
<g stroke="#000" stroke-width=".7"><path d="M46,47 L52.5,49"/><path d="M51,40 L58,42.5"/><path d="M56,33.5 L63.5,36"/><path d="M61,27 L69,29.5"/><path d="M66,20.5 L74,23"/></g>
<path d="M49.3,63 L85.6,17.7" stroke="#C03030" stroke-width=".9" stroke-dasharray="1.5 1.3"/>
<path d="M70,42.5 L73,42.5 M74.5,41.5 L74.5,44" stroke="#C03030" stroke-width=".8"/>
</g>
<path d="M154.5,485.5 L162.5,485.5 L165.5,488.5 L165.5,498.5 L154.5,498.5 Z" fill="#F8F8F6" stroke="#9A9A96"/><path d="M162.5,485.5 L162.5,488.5 L165.5,488.5" fill="none" stroke="#9A9A96"/><rect x="156" y="488" width="5" height="1" fill="#A8A8A4"/><rect x="156" y="490" width="8" height="1" fill="#A8A8A4"/><rect x="156" y="492" width="8" height="1" fill="#A8A8A4"/><rect x="156" y="494" width="8" height="1" fill="#A8A8A4"/><rect x="156" y="496" width="8" height="1" fill="#A8A8A4"/>
<rect x="426.5" y="110.5" width="101" height="101" fill="#fff" stroke="#E6E2CC"/>
<rect x="426.5" y="214.5" width="101" height="101" fill="#fff" stroke="#E6E2CC"/>
<rect x="426.5" y="360.5" width="101" height="101" fill="#fff" stroke="#E6E2CC"/>
<rect x="426.5" y="464.5" width="101" height="101" fill="#fff" stroke="#E6E2CC"/>
<path d="M532.5,154.5 L540.5,154.5 L543.5,157.5 L543.5,167.5 L532.5,167.5 Z" fill="#F8F8F6" stroke="#9A9A96"/><path d="M540.5,154.5 L540.5,157.5 L543.5,157.5" fill="none" stroke="#9A9A96"/><rect x="534" y="157" width="5" height="1" fill="#A8A8A4"/><rect x="534" y="159" width="8" height="1" fill="#A8A8A4"/><rect x="534" y="161" width="8" height="1" fill="#A8A8A4"/><rect x="534" y="163" width="8" height="1" fill="#A8A8A4"/><rect x="534" y="165" width="8" height="1" fill="#A8A8A4"/>
<path d="M532.5,258.5 L540.5,258.5 L543.5,261.5 L543.5,271.5 L532.5,271.5 Z" fill="#F8F8F6" stroke="#9A9A96"/><path d="M540.5,258.5 L540.5,261.5 L543.5,261.5" fill="none" stroke="#9A9A96"/><rect x="534" y="261" width="5" height="1" fill="#A8A8A4"/><rect x="534" y="263" width="8" height="1" fill="#A8A8A4"/><rect x="534" y="265" width="8" height="1" fill="#A8A8A4"/><rect x="534" y="267" width="8" height="1" fill="#A8A8A4"/><rect x="534" y="269" width="8" height="1" fill="#A8A8A4"/>
<path d="M532.5,404.5 L540.5,404.5 L543.5,407.5 L543.5,417.5 L532.5,417.5 Z" fill="#F8F8F6" stroke="#9A9A96"/><path d="M540.5,404.5 L540.5,407.5 L543.5,407.5" fill="none" stroke="#9A9A96"/><rect x="534" y="407" width="5" height="1" fill="#A8A8A4"/><rect x="534" y="409" width="8" height="1" fill="#A8A8A4"/><rect x="534" y="411" width="8" height="1" fill="#A8A8A4"/><rect x="534" y="413" width="8" height="1" fill="#A8A8A4"/><rect x="534" y="415" width="8" height="1" fill="#A8A8A4"/>
<path d="M532.5,508.5 L540.5,508.5 L543.5,511.5 L543.5,521.5 L532.5,521.5 Z" fill="#F8F8F6" stroke="#9A9A96"/><path d="M540.5,508.5 L540.5,511.5 L543.5,511.5" fill="none" stroke="#9A9A96"/><rect x="534" y="511" width="5" height="1" fill="#A8A8A4"/><rect x="534" y="513" width="8" height="1" fill="#A8A8A4"/><rect x="534" y="515" width="8" height="1" fill="#A8A8A4"/><rect x="534" y="517" width="8" height="1" fill="#A8A8A4"/><rect x="534" y="519" width="8" height="1" fill="#A8A8A4"/>
<rect x="773" y="109" width="17" height="206" fill="url(#gsbv)"/><rect x="774.5" y="109.5" width="14" height="15" rx="2.5" fill="url(#gbtn)" stroke="#fff"/><rect x="775" y="125" width="13" height="1" fill="#A4B8E0"/><path d="M777.8,119.5 L781.5,115.8 L785.2,119.5" stroke="#4D6185" stroke-width="2.2" fill="none"/><rect x="774.5" y="126.5" width="14" height="8" rx="2.5" fill="url(#gthv)" stroke="#fff"/><rect x="775" y="135" width="13" height="1" fill="#A4B8E0"/><rect x="774.5" y="298.5" width="14" height="15" rx="2.5" fill="url(#gbtn)" stroke="#fff"/><rect x="775" y="314" width="13" height="1" fill="#A4B8E0"/><path d="M777.8,304 L781.5,307.7 L785.2,304" stroke="#4D6185" stroke-width="2.2" fill="none"/>
<rect x="406" y="316" width="367" height="16" fill="url(#gsbh)"/><rect x="406.5" y="317.5" width="15" height="13" rx="2.5" fill="url(#gbtn)" stroke="#fff"/><rect x="422" y="318" width="1" height="12" fill="#A4B8E0"/><path d="M416,320.8 L412.3,324.5 L416,328.2" stroke="#4D6185" stroke-width="2.2" fill="none"/><rect x="423.5" y="317.5" width="290" height="13" rx="2.5" fill="url(#gthh)" stroke="#fff"/><rect x="714" y="318" width="1" height="12" fill="#A4B8E0"/><rect x="564" y="321" width="1" height="7" fill="#fff"/><rect x="565" y="321" width="1" height="7" fill="#A9BDEB"/><rect x="566" y="321" width="1" height="7" fill="#fff"/><rect x="567" y="321" width="1" height="7" fill="#A9BDEB"/><rect x="568" y="321" width="1" height="7" fill="#fff"/><rect x="569" y="321" width="1" height="7" fill="#A9BDEB"/><rect x="570" y="321" width="1" height="7" fill="#fff"/><rect x="571" y="321" width="1" height="7" fill="#A9BDEB"/><rect x="756.5" y="317.5" width="15" height="13" rx="2.5" fill="url(#gbtn)" stroke="#fff"/><rect x="772" y="318" width="1" height="12" fill="#A4B8E0"/><path d="M762,320.8 L765.7,324.5 L762,328.2" stroke="#4D6185" stroke-width="2.2" fill="none"/>
<rect x="773" y="315" width="17" height="17" fill="#ECE9D8"/>
<rect x="773" y="359" width="17" height="204" fill="url(#gsbv)"/><rect x="774.5" y="359.5" width="14" height="15" rx="2.5" fill="url(#gbtn)" stroke="#fff"/><rect x="775" y="375" width="13" height="1" fill="#A4B8E0"/><path d="M777.8,369.5 L781.5,365.8 L785.2,369.5" stroke="#4D6185" stroke-width="2.2" fill="none"/><rect x="774.5" y="376.5" width="14" height="7" rx="2.5" fill="url(#gthv)" stroke="#fff"/><rect x="775" y="384" width="13" height="1" fill="#A4B8E0"/><rect x="774.5" y="546.5" width="14" height="15" rx="2.5" fill="url(#gbtn)" stroke="#fff"/><rect x="775" y="562" width="13" height="1" fill="#A4B8E0"/><path d="M777.8,552 L781.5,555.7 L785.2,552" stroke="#4D6185" stroke-width="2.2" fill="none"/>
<rect x="406" y="564" width="367" height="16" fill="url(#gsbh)"/><rect x="406.5" y="565.5" width="15" height="13" rx="2.5" fill="url(#gbtn)" stroke="#fff"/><rect x="422" y="566" width="1" height="12" fill="#A4B8E0"/><path d="M416,568.8 L412.3,572.5 L416,576.2" stroke="#4D6185" stroke-width="2.2" fill="none"/><rect x="423.5" y="565.5" width="296" height="13" rx="2.5" fill="url(#gthh)" stroke="#fff"/><rect x="720" y="566" width="1" height="12" fill="#A4B8E0"/><rect x="567" y="569" width="1" height="7" fill="#fff"/><rect x="568" y="569" width="1" height="7" fill="#A9BDEB"/><rect x="569" y="569" width="1" height="7" fill="#fff"/><rect x="570" y="569" width="1" height="7" fill="#A9BDEB"/><rect x="571" y="569" width="1" height="7" fill="#fff"/><rect x="572" y="569" width="1" height="7" fill="#A9BDEB"/><rect x="573" y="569" width="1" height="7" fill="#fff"/><rect x="574" y="569" width="1" height="7" fill="#A9BDEB"/><rect x="756.5" y="565.5" width="15" height="13" rx="2.5" fill="url(#gbtn)" stroke="#fff"/><rect x="772" y="566" width="1" height="12" fill="#A4B8E0"/><path d="M762,568.8 L765.7,572.5 L762,576.2" stroke="#4D6185" stroke-width="2.2" fill="none"/>
<rect x="773" y="563" width="17" height="17" fill="#ECE9D8"/>
<!-- photo1 drawing -->
<g stroke="#1A1A1A" fill="none" stroke-width=".75">
<path d="M457,132 Q455,155 457,172 Q458,185 466,196" stroke-dasharray="3 1"/>
<path d="M461,122 Q464,145 462,165 Q463,180 470,193" stroke-dasharray="2 1.5"/>
<path d="M467,117 Q470,135 468,158 Q467,175 473,190" stroke-dasharray="1.5 1"/>
<path d="M456,131 L462,125 M455,150 L450,148 M458,170 L452,172 M463,140 L468,138"/>
<path d="M473.0,133.7 L476.5,133.9 L480.0,134.5 L483.5,133.9 L487.0,134.5 L490.5,131.9 L494.0,133.3 L497.5,134.8 L501.0,133.9" stroke-dasharray="2.5 1.2 1 1.5" stroke="#333"/>
<path d="M473.0,136.8 L476.5,138.1 L480.0,137.6 L483.5,138.7 L487.0,139.0 L490.5,137.5 L494.0,138.4 L497.5,138.7 L501.0,140.9" stroke-dasharray="2.5 1.2 1 1.5" stroke="#333"/>
<path d="M473.0,142.0 L476.5,144.0 L480.0,142.2 L483.5,143.8 L487.0,142.4 L490.5,142.2 L494.0,144.9 L497.5,143.1 L501.0,143.2" stroke-dasharray="2.5 1.2 1 1.5" stroke="#333"/>
<path d="M473.0,151.1 L476.5,149.6 L480.0,151.9 L483.5,150.8 L487.0,151.5 L490.5,150.3 L494.0,152.8 L497.5,152.3 L501.0,153.3" stroke-dasharray="2.5 1.2 1 1.5" stroke="#333"/>
<path d="M473.0,154.4 L476.5,154.8 L480.0,154.4 L483.5,154.5 L487.0,154.5 L490.5,155.4 L494.0,156.5 L497.5,154.9 L501.0,157.1" stroke-dasharray="2.5 1.2 1 1.5" stroke="#333"/>
<path d="M473.0,159.4 L476.5,160.9 L480.0,159.8 L483.5,159.2 L487.0,159.6 L490.5,160.2 L494.0,158.2 L497.5,160.9 L501.0,157.9" stroke-dasharray="2.5 1.2 1 1.5" stroke="#333"/>
<ellipse cx="481" cy="167" rx="5" ry="3"/>
<path d="M497,161 Q503,167 497,173"/>
<path d="M477,175 L495,175 M478,178 L493,178" stroke-dasharray="1 .8"/>
<path d="M474.0,184.7 L477.7,185.3 L481.4,183.1 L485.1,185.7 L488.9,184.7 L492.6,185.7 L496.3,184.2 L500.0,184.6"/>
<path d="M486,127 Q490,119 493,123 Q497,116 499,126 M489,129 L497,127 M492,118 L494,131"/>
<path d="M478,188 L484,192 M490,188 L500,193"/>
</g>
<path d="M452,194 L503,194" stroke="#444" stroke-width=".7" stroke-dasharray="1 1.5"/>
<path d="M453,198 L502,198" stroke="#111" stroke-width="1.1" stroke-dasharray="2 1 1 1 3 1"/>
<path d="M453,200.5 L502,200.5" stroke="#000" stroke-width="1.4" stroke-dasharray="1 1 2 1 1 2"/>
<path d="M454,203 L480,203" stroke="#777" stroke-width=".7" stroke-dasharray="1 1"/>

<!-- photo2 brevifolia -->
<rect x="445" y="220" width="64" height="90" fill="#000"/>
<defs><clipPath id="cp2"><rect x="445" y="220" width="64" height="90"/></clipPath><filter id="blur1" x="-50%" y="-50%" width="200%" height="200%"><feGaussianBlur stdDeviation="1.5"/></filter>
<filter id="blur05"><feGaussianBlur stdDeviation=".6"/></filter></defs>
<g clip-path="url(#cp2)"><g filter="url(#blur1)">
<path d="M445,224 Q452,221 458,226 L460,262 Q463,290 461,310 L445,310 Z" fill="#3E3E3A"/>
<path d="M458,230 Q464,228 468,236 L467,300 L461,300 Z" fill="#262624"/>
</g>
<rect x="452.7" y="271.3" width="1.5" height="1.5" fill="#6A6A64"/>
<rect x="452.7" y="297.2" width="1.5" height="1.5" fill="#2A2A28"/>
<rect x="448.1" y="267.0" width="1.5" height="1.5" fill="#2A2A28"/>
<rect x="446.6" y="248.7" width="1.5" height="1.5" fill="#5A5A56"/>
<rect x="454.2" y="300.4" width="1.5" height="1.5" fill="#5A5A56"/>
<rect x="455.1" y="256.9" width="1.5" height="1.5" fill="#6A6A64"/>
<rect x="456.1" y="276.2" width="1.5" height="1.5" fill="#2A2A28"/>
<rect x="455.6" y="295.2" width="1.5" height="1.5" fill="#5A5A56"/>
<rect x="446.0" y="238.7" width="1.5" height="1.5" fill="#2A2A28"/>
<rect x="455.2" y="290.5" width="1.5" height="1.5" fill="#4A5068"/>
<rect x="452.5" y="296.1" width="1.5" height="1.5" fill="#2A2A28"/>
<rect x="455.9" y="266.0" width="1.5" height="1.5" fill="#5A5A56"/>
<rect x="452.8" y="246.5" width="1.5" height="1.5" fill="#5A5A56"/>
<rect x="457.0" y="249.7" width="1.5" height="1.5" fill="#2A2A28"/>
<rect x="453.7" y="224.6" width="1.5" height="1.5" fill="#5A5A56"/>
<rect x="451.8" y="296.5" width="1.5" height="1.5" fill="#6A6A64"/>
<rect x="446.1" y="223.5" width="1.5" height="1.5" fill="#5A5A56"/>
<rect x="448.6" y="303.6" width="1.5" height="1.5" fill="#5A5A56"/>
<rect x="453.0" y="308.3" width="1.5" height="1.5" fill="#6A6A64"/>
<rect x="452.1" y="271.8" width="1.5" height="1.5" fill="#2A2A28"/>
<rect x="458.2" y="245.7" width="1.5" height="1.5" fill="#5A5A56"/>
<rect x="450.3" y="223.3" width="1.5" height="1.5" fill="#6A6A64"/>
<rect x="457.9" y="232.4" width="1.5" height="1.5" fill="#2A2A28"/>
<rect x="457.0" y="223.0" width="1.5" height="1.5" fill="#6A6A64"/>
<rect x="458.5" y="237.6" width="1.5" height="1.5" fill="#2A2A28"/>
<rect x="452.6" y="238.8" width="1.5" height="1.5" fill="#2A2A28"/>
<rect x="452.1" y="255.8" width="1.5" height="1.5" fill="#6A6A64"/>
<rect x="452.2" y="240.7" width="1.5" height="1.5" fill="#4A5068"/>
<rect x="459.7" y="307.8" width="1.5" height="1.5" fill="#4A5068"/>
<rect x="462.0" y="223.7" width="1.5" height="1.5" fill="#2A2A28"/>
<rect x="451.7" y="297.2" width="1.5" height="1.5" fill="#5A5A56"/>
<rect x="445.7" y="234.9" width="1.5" height="1.5" fill="#6A6A64"/>
<rect x="449.4" y="290.0" width="1.5" height="1.5" fill="#4A5068"/>
<rect x="459.1" y="256.0" width="1.5" height="1.5" fill="#5A5A56"/>
<rect x="446.5" y="273.3" width="1.5" height="1.5" fill="#2A2A28"/>
<rect x="445.3" y="254.4" width="1.5" height="1.5" fill="#6A6A64"/>
<rect x="447.2" y="273.7" width="1.5" height="1.5" fill="#2A2A28"/>
<rect x="459.7" y="238.1" width="1.5" height="1.5" fill="#2A2A28"/>
<rect x="450.3" y="242.1" width="1.5" height="1.5" fill="#2A2A28"/>
<rect x="457.3" y="235.9" width="1.5" height="1.5" fill="#2A2A28"/>
<rect x="456.7" y="256.2" width="1.5" height="1.5" fill="#6A6A64"/>
<rect x="455.3" y="259.1" width="1.5" height="1.5" fill="#5A5A56"/>
<rect x="446.9" y="267.1" width="1.5" height="1.5" fill="#4A5068"/>
<rect x="449.1" y="284.0" width="1.5" height="1.5" fill="#4A5068"/>
<rect x="452.2" y="301.6" width="1.5" height="1.5" fill="#6A6A64"/>
<rect x="450.0" y="237.4" width="1.5" height="1.5" fill="#5A5A56"/>
<rect x="447.1" y="264.2" width="1.5" height="1.5" fill="#5A5A56"/>
<rect x="449.8" y="302.7" width="1.5" height="1.5" fill="#2A2A28"/>
<rect x="457.7" y="228.1" width="1.5" height="1.5" fill="#6A6A64"/>
<rect x="452.6" y="227.3" width="1.5" height="1.5" fill="#2A2A28"/>
<rect x="449.8" y="268.7" width="1.5" height="1.5" fill="#2A2A28"/>
<rect x="446.6" y="234.2" width="1.5" height="1.5" fill="#6A6A64"/>
<rect x="461.7" y="279.8" width="1.5" height="1.5" fill="#2A2A28"/>
<rect x="455.0" y="303.3" width="1.5" height="1.5" fill="#6A6A64"/>
<rect x="460.5" y="283.7" width="1.5" height="1.5" fill="#5A5A56"/>
<rect x="445.4" y="278.0" width="1.5" height="1.5" fill="#6A6A64"/>
<rect x="446.1" y="249.4" width="1.5" height="1.5" fill="#2A2A28"/>
<rect x="462.0" y="228.6" width="1.5" height="1.5" fill="#4A5068"/>
<rect x="457.5" y="301.2" width="1.5" height="1.5" fill="#2A2A28"/>
<rect x="458.5" y="302.5" width="1.5" height="1.5" fill="#4A5068"/>
<g filter="url(#blur05)">
<path d="M446,268 L455,310 M458,267 L448,310" stroke="#74726A" stroke-width="1.5" fill="none"/>
<path d="M474,236 Q476,260 477,275 Q479,290 481,306 M477,272 L492,260 M470,266 L482,267" stroke="#7C8070" stroke-width=".8" fill="none"/>
<path d="M504,285 Q496,296 491,309 M487,275 L486,300" stroke="#3A3A38" stroke-width="1.2" fill="none"/>
<ellipse cx="463.5" cy="231.6" rx="1.8" ry="1.2" transform="rotate(19 463.5 231.6)" fill="#7EAE62"/>
<ellipse cx="477.7" cy="230.8" rx="1.8" ry="1.2" transform="rotate(7 477.7 230.8)" fill="#7EAE62"/>
<ellipse cx="477.5" cy="233.0" rx="1.8" ry="1.2" transform="rotate(159 477.5 233.0)" fill="#7EAE62"/>
<ellipse cx="473.9" cy="230.3" rx="1.8" ry="1.2" transform="rotate(3 473.9 230.3)" fill="#7EAE62"/>
<ellipse cx="473.0" cy="226.1" rx="1.8" ry="1.2" transform="rotate(163 473.0 226.1)" fill="#7EAE62"/>
<ellipse cx="464.1" cy="228.6" rx="1.8" ry="1.2" transform="rotate(106 464.1 228.6)" fill="#7EAE62"/>
<ellipse cx="475.1" cy="230.4" rx="1.8" ry="1.2" transform="rotate(177 475.1 230.4)" fill="#7EAE62"/>
<ellipse cx="472.5" cy="231.2" rx="1.8" ry="1.2" transform="rotate(138 472.5 231.2)" fill="#7EAE62"/>
<ellipse cx="463.5" cy="235.5" rx="1.8" ry="1.2" transform="rotate(7 463.5 235.5)" fill="#7EAE62"/>
<ellipse cx="467.6" cy="226.2" rx="1.8" ry="1.2" transform="rotate(5 467.6 226.2)" fill="#7EAE62"/>
<ellipse cx="466.1" cy="234.8" rx="1.8" ry="1.2" transform="rotate(127 466.1 234.8)" fill="#7EAE62"/>
<ellipse cx="476.0" cy="234.2" rx="1.8" ry="1.2" transform="rotate(124 476.0 234.2)" fill="#7EAE62"/>
<ellipse cx="466.6" cy="225.2" rx="1.8" ry="1.2" transform="rotate(77 466.6 225.2)" fill="#7EAE62"/>
<ellipse cx="464.6" cy="233.6" rx="1.8" ry="1.2" transform="rotate(132 464.6 233.6)" fill="#7EAE62"/>
<ellipse cx="465.1" cy="237.7" rx="1.8" ry="1.2" transform="rotate(168 465.1 237.7)" fill="#7EAE62"/>
<ellipse cx="478.7" cy="232.0" rx="1.8" ry="1.2" transform="rotate(61 478.7 232.0)" fill="#7EAE62"/>
<ellipse cx="467.9" cy="234.3" rx="1.8" ry="1.2" transform="rotate(50 467.9 234.3)" fill="#7EAE62"/>
<ellipse cx="473.4" cy="236.3" rx="1.8" ry="1.2" transform="rotate(51 473.4 236.3)" fill="#7EAE62"/>
<ellipse cx="477.8" cy="230.4" rx="1.8" ry="1.2" transform="rotate(149 477.8 230.4)" fill="#7EAE62"/>
<ellipse cx="478.6" cy="227.9" rx="1.8" ry="1.2" transform="rotate(34 478.6 227.9)" fill="#7EAE62"/>
<ellipse cx="470.9" cy="236.7" rx="1.8" ry="1.2" transform="rotate(10 470.9 236.7)" fill="#7EAE62"/>
<ellipse cx="474.8" cy="238.3" rx="1.8" ry="1.2" transform="rotate(70 474.8 238.3)" fill="#7EAE62"/>
<ellipse cx="472.2" cy="227.9" rx="1.8" ry="1.2" transform="rotate(120 472.2 227.9)" fill="#B8D8A0"/>
<ellipse cx="466.8" cy="228.7" rx="1.8" ry="1.2" transform="rotate(105 466.8 228.7)" fill="#B8D8A0"/>
<ellipse cx="467.8" cy="231.2" rx="1.8" ry="1.2" transform="rotate(172 467.8 231.2)" fill="#B8D8A0"/>
<ellipse cx="467.2" cy="233.7" rx="1.8" ry="1.2" transform="rotate(159 467.2 233.7)" fill="#B8D8A0"/>
<ellipse cx="468.5" cy="227.6" rx="1.8" ry="1.2" transform="rotate(8 468.5 227.6)" fill="#B8D8A0"/>
<ellipse cx="466.8" cy="231.9" rx="1.8" ry="1.2" transform="rotate(173 466.8 231.9)" fill="#B8D8A0"/>
<ellipse cx="471.1" cy="231.6" rx="1.8" ry="1.2" transform="rotate(79 471.1 231.6)" fill="#B8D8A0"/>
<ellipse cx="470.5" cy="231.5" rx="1.8" ry="1.2" transform="rotate(164 470.5 231.5)" fill="#B8D8A0"/>
<ellipse cx="472.6" cy="248.5" rx="1.8" ry="1.2" transform="rotate(6 472.6 248.5)" fill="#6E9E56"/>
<ellipse cx="480.2" cy="246.7" rx="1.8" ry="1.2" transform="rotate(36 480.2 246.7)" fill="#6E9E56"/>
<ellipse cx="480.6" cy="253.8" rx="1.8" ry="1.2" transform="rotate(29 480.6 253.8)" fill="#6E9E56"/>
<ellipse cx="476.4" cy="250.3" rx="1.8" ry="1.2" transform="rotate(167 476.4 250.3)" fill="#6E9E56"/>
<ellipse cx="478.7" cy="247.7" rx="1.8" ry="1.2" transform="rotate(19 478.7 247.7)" fill="#6E9E56"/>
<ellipse cx="479.2" cy="246.0" rx="1.8" ry="1.2" transform="rotate(121 479.2 246.0)" fill="#6E9E56"/>
<ellipse cx="474.1" cy="251.1" rx="1.8" ry="1.2" transform="rotate(120 474.1 251.1)" fill="#6E9E56"/>
<ellipse cx="477.4" cy="244.4" rx="1.8" ry="1.2" transform="rotate(57 477.4 244.4)" fill="#6E9E56"/>
<ellipse cx="474.3" cy="247.5" rx="1.8" ry="1.2" transform="rotate(178 474.3 247.5)" fill="#6E9E56"/>
<ellipse cx="482.4" cy="249.0" rx="1.8" ry="1.2" transform="rotate(40 482.4 249.0)" fill="#6E9E56"/>
<ellipse cx="475.7" cy="251.9" rx="1.8" ry="1.2" transform="rotate(57 475.7 251.9)" fill="#6E9E56"/>
<ellipse cx="472.0" cy="253.3" rx="1.8" ry="1.2" transform="rotate(99 472.0 253.3)" fill="#6E9E56"/>
<ellipse cx="472.6" cy="248.5" rx="1.8" ry="1.2" transform="rotate(160 472.6 248.5)" fill="#6E9E56"/>
<ellipse cx="481.6" cy="244.1" rx="1.8" ry="1.2" transform="rotate(140 481.6 244.1)" fill="#6E9E56"/>
<ellipse cx="471.8" cy="282.3" rx="1.8" ry="1.2" transform="rotate(87 471.8 282.3)" fill="#7EAE62"/>
<ellipse cx="470.6" cy="280.9" rx="1.8" ry="1.2" transform="rotate(52 470.6 280.9)" fill="#7EAE62"/>
<ellipse cx="466.2" cy="282.2" rx="1.8" ry="1.2" transform="rotate(164 466.2 282.2)" fill="#7EAE62"/>
<ellipse cx="476.1" cy="277.7" rx="1.8" ry="1.2" transform="rotate(62 476.1 277.7)" fill="#7EAE62"/>
<ellipse cx="475.8" cy="282.9" rx="1.8" ry="1.2" transform="rotate(79 475.8 282.9)" fill="#7EAE62"/>
<ellipse cx="471.4" cy="281.7" rx="1.8" ry="1.2" transform="rotate(82 471.4 281.7)" fill="#7EAE62"/>
<ellipse cx="468.1" cy="281.3" rx="1.8" ry="1.2" transform="rotate(4 468.1 281.3)" fill="#7EAE62"/>
<ellipse cx="469.2" cy="277.5" rx="1.8" ry="1.2" transform="rotate(112 469.2 277.5)" fill="#7EAE62"/>
<ellipse cx="469.1" cy="279.5" rx="1.8" ry="1.2" transform="rotate(70 469.1 279.5)" fill="#7EAE62"/>
<ellipse cx="470.8" cy="277.2" rx="1.8" ry="1.2" transform="rotate(16 470.8 277.2)" fill="#7EAE62"/>
<ellipse cx="495" cy="259.5" rx="3.5" ry="2" transform="rotate(-25 495 259.5)" fill="#E0C088"/>
<path d="M454,226 L460,226" stroke="#bbb" stroke-width="1"/>
</g></g>

<!-- photo3 abrus -->
<rect x="432" y="375" width="90" height="72" fill="#000"/>
<clipPath id="cp3"><rect x="432" y="375" width="90" height="72"/></clipPath><g clip-path="url(#cp3)"><g filter="url(#blur05)">
<path d="M432,392 L478,382" stroke="#1C2A14" stroke-width=".6"/>
<ellipse cx="436.9" cy="387.8" rx="3.5" ry="1.1" transform="rotate(-72 436.9 387.8)" fill="#1C2A14"/>
<ellipse cx="438.2" cy="393.8" rx="3.5" ry="1.1" transform="rotate(48 438.2 393.8)" fill="#1C2A14"/>
<ellipse cx="444.6" cy="386.2" rx="3.5" ry="1.1" transform="rotate(-72 444.6 386.2)" fill="#1C2A14"/>
<ellipse cx="445.9" cy="392.1" rx="3.5" ry="1.1" transform="rotate(48 445.9 392.1)" fill="#1C2A14"/>
<ellipse cx="452.2" cy="384.5" rx="3.5" ry="1.1" transform="rotate(-72 452.2 384.5)" fill="#1C2A14"/>
<ellipse cx="453.5" cy="390.4" rx="3.5" ry="1.1" transform="rotate(48 453.5 390.4)" fill="#1C2A14"/>
<ellipse cx="459.9" cy="382.8" rx="3.5" ry="1.1" transform="rotate(-72 459.9 382.8)" fill="#1C2A14"/>
<ellipse cx="461.2" cy="388.8" rx="3.5" ry="1.1" transform="rotate(48 461.2 388.8)" fill="#1C2A14"/>
<ellipse cx="467.6" cy="381.2" rx="3.5" ry="1.1" transform="rotate(-72 467.6 381.2)" fill="#1C2A14"/>
<ellipse cx="468.9" cy="387.1" rx="3.5" ry="1.1" transform="rotate(48 468.9 387.1)" fill="#1C2A14"/>
<ellipse cx="475.2" cy="379.5" rx="3.5" ry="1.1" transform="rotate(-72 475.2 379.5)" fill="#1C2A14"/>
<ellipse cx="476.5" cy="385.4" rx="3.5" ry="1.1" transform="rotate(48 476.5 385.4)" fill="#1C2A14"/>
<path d="M432,410 L470,398" stroke="#25361A" stroke-width=".6"/>
<ellipse cx="435.6" cy="405.5" rx="3.5" ry="1.2" transform="rotate(-83 435.6 405.5)" fill="#25361A"/>
<ellipse cx="437.5" cy="411.6" rx="3.5" ry="1.2" transform="rotate(47 437.5 411.6)" fill="#25361A"/>
<ellipse cx="442.0" cy="403.5" rx="3.5" ry="1.2" transform="rotate(-83 442.0 403.5)" fill="#25361A"/>
<ellipse cx="443.9" cy="409.6" rx="3.5" ry="1.2" transform="rotate(47 443.9 409.6)" fill="#25361A"/>
<ellipse cx="448.3" cy="401.5" rx="3.5" ry="1.2" transform="rotate(-83 448.3 401.5)" fill="#25361A"/>
<ellipse cx="450.2" cy="407.6" rx="3.5" ry="1.2" transform="rotate(47 450.2 407.6)" fill="#25361A"/>
<ellipse cx="454.6" cy="399.5" rx="3.5" ry="1.2" transform="rotate(-83 454.6 399.5)" fill="#25361A"/>
<ellipse cx="456.5" cy="405.6" rx="3.5" ry="1.2" transform="rotate(47 456.5 405.6)" fill="#25361A"/>
<ellipse cx="461.0" cy="397.5" rx="3.5" ry="1.2" transform="rotate(-83 461.0 397.5)" fill="#25361A"/>
<ellipse cx="462.9" cy="403.6" rx="3.5" ry="1.2" transform="rotate(47 462.9 403.6)" fill="#25361A"/>
<ellipse cx="467.3" cy="395.5" rx="3.5" ry="1.2" transform="rotate(-83 467.3 395.5)" fill="#25361A"/>
<ellipse cx="469.2" cy="401.6" rx="3.5" ry="1.2" transform="rotate(47 469.2 401.6)" fill="#25361A"/>
<path d="M432,428 L468,414" stroke="#2E4220" stroke-width=".6"/>
<ellipse cx="435.2" cy="423.3" rx="3.5" ry="1.3" transform="rotate(-86 435.2 423.3)" fill="#2E4220"/>
<ellipse cx="437.5" cy="429.3" rx="3.5" ry="1.3" transform="rotate(44 437.5 429.3)" fill="#2E4220"/>
<ellipse cx="441.2" cy="421.0" rx="3.5" ry="1.3" transform="rotate(-86 441.2 421.0)" fill="#2E4220"/>
<ellipse cx="443.5" cy="426.9" rx="3.5" ry="1.3" transform="rotate(44 443.5 426.9)" fill="#2E4220"/>
<ellipse cx="447.2" cy="418.7" rx="3.5" ry="1.3" transform="rotate(-86 447.2 418.7)" fill="#2E4220"/>
<ellipse cx="449.5" cy="424.6" rx="3.5" ry="1.3" transform="rotate(44 449.5 424.6)" fill="#2E4220"/>
<ellipse cx="453.2" cy="416.3" rx="3.5" ry="1.3" transform="rotate(-86 453.2 416.3)" fill="#2E4220"/>
<ellipse cx="455.5" cy="422.3" rx="3.5" ry="1.3" transform="rotate(44 455.5 422.3)" fill="#2E4220"/>
<ellipse cx="459.2" cy="414.0" rx="3.5" ry="1.3" transform="rotate(-86 459.2 414.0)" fill="#2E4220"/>
<ellipse cx="461.5" cy="419.9" rx="3.5" ry="1.3" transform="rotate(44 461.5 419.9)" fill="#2E4220"/>
<ellipse cx="465.2" cy="411.7" rx="3.5" ry="1.3" transform="rotate(-86 465.2 411.7)" fill="#2E4220"/>
<ellipse cx="467.5" cy="417.6" rx="3.5" ry="1.3" transform="rotate(44 467.5 417.6)" fill="#2E4220"/>
<path d="M436,446 L470,432" stroke="#34482A" stroke-width=".6"/>
<ellipse cx="439.9" cy="441.1" rx="3.5" ry="1.3" transform="rotate(-82 439.9 441.1)" fill="#34482A"/>
<ellipse cx="442.2" cy="446.7" rx="3.5" ry="1.3" transform="rotate(38 442.2 446.7)" fill="#34482A"/>
<ellipse cx="446.7" cy="438.3" rx="3.5" ry="1.3" transform="rotate(-82 446.7 438.3)" fill="#34482A"/>
<ellipse cx="449.0" cy="443.9" rx="3.5" ry="1.3" transform="rotate(38 449.0 443.9)" fill="#34482A"/>
<ellipse cx="453.5" cy="435.5" rx="3.5" ry="1.3" transform="rotate(-82 453.5 435.5)" fill="#34482A"/>
<ellipse cx="455.8" cy="441.1" rx="3.5" ry="1.3" transform="rotate(38 455.8 441.1)" fill="#34482A"/>
<ellipse cx="460.3" cy="432.7" rx="3.5" ry="1.3" transform="rotate(-82 460.3 432.7)" fill="#34482A"/>
<ellipse cx="462.6" cy="438.3" rx="3.5" ry="1.3" transform="rotate(38 462.6 438.3)" fill="#34482A"/>
<ellipse cx="467.1" cy="429.9" rx="3.5" ry="1.3" transform="rotate(-82 467.1 429.9)" fill="#34482A"/>
<ellipse cx="469.4" cy="435.5" rx="3.5" ry="1.3" transform="rotate(38 469.4 435.5)" fill="#34482A"/>
<path d="M488,398 L522,378" stroke="#223018" stroke-width=".6"/>
<ellipse cx="490.1" cy="392.4" rx="4.0" ry="1.2" transform="rotate(-100 490.1 392.4)" fill="#223018"/>
<ellipse cx="493.9" cy="398.9" rx="4.0" ry="1.2" transform="rotate(40 493.9 398.9)" fill="#223018"/>
<ellipse cx="495.8" cy="389.1" rx="4.0" ry="1.2" transform="rotate(-100 495.8 389.1)" fill="#223018"/>
<ellipse cx="499.6" cy="395.5" rx="4.0" ry="1.2" transform="rotate(40 499.6 395.5)" fill="#223018"/>
<ellipse cx="501.4" cy="385.7" rx="4.0" ry="1.2" transform="rotate(-100 501.4 385.7)" fill="#223018"/>
<ellipse cx="505.3" cy="392.2" rx="4.0" ry="1.2" transform="rotate(40 505.3 392.2)" fill="#223018"/>
<ellipse cx="507.1" cy="382.4" rx="4.0" ry="1.2" transform="rotate(-100 507.1 382.4)" fill="#223018"/>
<ellipse cx="510.9" cy="388.9" rx="4.0" ry="1.2" transform="rotate(40 510.9 388.9)" fill="#223018"/>
<ellipse cx="512.8" cy="379.1" rx="4.0" ry="1.2" transform="rotate(-100 512.8 379.1)" fill="#223018"/>
<ellipse cx="516.6" cy="385.5" rx="4.0" ry="1.2" transform="rotate(40 516.6 385.5)" fill="#223018"/>
<ellipse cx="518.4" cy="375.7" rx="4.0" ry="1.2" transform="rotate(-100 518.4 375.7)" fill="#223018"/>
<ellipse cx="522.3" cy="382.2" rx="4.0" ry="1.2" transform="rotate(40 522.3 382.2)" fill="#223018"/>
<path d="M470,380 L505,375" stroke="#1A2412" stroke-width=".6"/>
<ellipse cx="474.1" cy="376.6" rx="3.0" ry="1.0" transform="rotate(-78 474.1 376.6)" fill="#1A2412"/>
<ellipse cx="474.9" cy="382.1" rx="3.0" ry="1.0" transform="rotate(62 474.9 382.1)" fill="#1A2412"/>
<ellipse cx="481.1" cy="375.6" rx="3.0" ry="1.0" transform="rotate(-78 481.1 375.6)" fill="#1A2412"/>
<ellipse cx="481.9" cy="381.1" rx="3.0" ry="1.0" transform="rotate(62 481.9 381.1)" fill="#1A2412"/>
<ellipse cx="488.1" cy="374.6" rx="3.0" ry="1.0" transform="rotate(-78 488.1 374.6)" fill="#1A2412"/>
<ellipse cx="488.9" cy="380.1" rx="3.0" ry="1.0" transform="rotate(62 488.9 380.1)" fill="#1A2412"/>
<ellipse cx="495.1" cy="373.6" rx="3.0" ry="1.0" transform="rotate(-78 495.1 373.6)" fill="#1A2412"/>
<ellipse cx="495.9" cy="379.1" rx="3.0" ry="1.0" transform="rotate(62 495.9 379.1)" fill="#1A2412"/>
<ellipse cx="502.1" cy="372.6" rx="3.0" ry="1.0" transform="rotate(-78 502.1 372.6)" fill="#1A2412"/>
<ellipse cx="502.9" cy="378.1" rx="3.0" ry="1.0" transform="rotate(62 502.9 378.1)" fill="#1A2412"/>
<path d="M486,447 L522,405" stroke="#4E6A36" stroke-width=".6"/>
<ellipse cx="487.8" cy="438.7" rx="5.0" ry="1.8" transform="rotate(-104 487.8 438.7)" fill="#4E6A36"/>
<ellipse cx="494.0" cy="444.0" rx="5.0" ry="1.8" transform="rotate(6 494.0 444.0)" fill="#4E6A36"/>
<ellipse cx="493.8" cy="431.7" rx="5.0" ry="1.8" transform="rotate(-104 493.8 431.7)" fill="#4E6A36"/>
<ellipse cx="500.0" cy="437.0" rx="5.0" ry="1.8" transform="rotate(6 500.0 437.0)" fill="#4E6A36"/>
<ellipse cx="499.8" cy="424.7" rx="5.0" ry="1.8" transform="rotate(-104 499.8 424.7)" fill="#4E6A36"/>
<ellipse cx="506.0" cy="430.0" rx="5.0" ry="1.8" transform="rotate(6 506.0 430.0)" fill="#4E6A36"/>
<ellipse cx="505.8" cy="417.7" rx="5.0" ry="1.8" transform="rotate(-104 505.8 417.7)" fill="#4E6A36"/>
<ellipse cx="512.0" cy="423.0" rx="5.0" ry="1.8" transform="rotate(6 512.0 423.0)" fill="#4E6A36"/>
<ellipse cx="511.8" cy="410.7" rx="5.0" ry="1.8" transform="rotate(-104 511.8 410.7)" fill="#4E6A36"/>
<ellipse cx="518.0" cy="416.0" rx="5.0" ry="1.8" transform="rotate(6 518.0 416.0)" fill="#4E6A36"/>
<ellipse cx="517.8" cy="403.7" rx="5.0" ry="1.8" transform="rotate(-104 517.8 403.7)" fill="#4E6A36"/>
<ellipse cx="524.0" cy="409.0" rx="5.0" ry="1.8" transform="rotate(6 524.0 409.0)" fill="#4E6A36"/>
<path d="M500,447 L522,428" stroke="#3E5A2C" stroke-width=".6"/>
<ellipse cx="503.6" cy="439.8" rx="4.0" ry="1.5" transform="rotate(-91 503.6 439.8)" fill="#3E5A2C"/>
<ellipse cx="507.6" cy="444.5" rx="4.0" ry="1.5" transform="rotate(9 507.6 444.5)" fill="#3E5A2C"/>
<ellipse cx="510.9" cy="433.5" rx="4.0" ry="1.5" transform="rotate(-91 510.9 433.5)" fill="#3E5A2C"/>
<ellipse cx="514.9" cy="438.1" rx="4.0" ry="1.5" transform="rotate(9 514.9 438.1)" fill="#3E5A2C"/>
<ellipse cx="518.3" cy="427.2" rx="4.0" ry="1.5" transform="rotate(-91 518.3 427.2)" fill="#3E5A2C"/>
<ellipse cx="522.3" cy="431.8" rx="4.0" ry="1.5" transform="rotate(9 522.3 431.8)" fill="#3E5A2C"/>
<ellipse cx="449" cy="445" rx="9" ry="4" fill="#6A8A50"/>
<path d="M481,388 L483,412 L480,432" stroke="#8A9050" stroke-width="1.6" fill="none"/>
<g fill="#EDC8C0"><path d="M456,400 Q462,392 476,396 Q474,404 463,405 Z"/><path d="M467,410 Q472,406 478,408 Q476,414 468,414 Z"/><path d="M469,423 Q475,417 481,418 Q478,425 470,425 Z"/></g>
<g fill="#D8C078"><ellipse cx="482" cy="392" rx="3" ry="2"/><ellipse cx="484" cy="402" rx="3.5" ry="2"/><ellipse cx="493" cy="410" rx="5" ry="1.8"/><ellipse cx="480" cy="422" rx="3" ry="2"/><ellipse cx="482" cy="430" rx="3" ry="2"/></g>
<path d="M477,396 L479,399" stroke="#C84030" stroke-width="1.2"/>
</g></g><rect x="434" y="377" width="7" height="1" fill="#ccc"/>

<!-- photo4 americana -->
<rect x="444" y="470" width="66" height="90" fill="#000"/>
<clipPath id="cp4"><rect x="444" y="470" width="66" height="90"/></clipPath><g clip-path="url(#cp4)"><g filter="url(#blur05)">
<g stroke="#5E5A4C" stroke-width="1" fill="none">
<path d="M478,472 L490,490 L508,484 M500,470 L510,500 M466,508 L492,505 L510,498 M484,516 L484,498 M476,515 L500,508 M470,513 L490,520"/>
<path d="M503,505 L488,530 M495,520 L481,548"/>
</g>
<g stroke="#8A8470" stroke-width="3.8" fill="none" stroke-linecap="round">
<path d="M450,495 Q463,491 476,479"/>
<path d="M466,500 Q477,491 479,478"/>
<path d="M471,503 Q485,495 489,483"/>
<path d="M460,530 Q468,527 476,520"/>
<path d="M473,538 Q483,533 489,522"/>
<path d="M486,541 Q495,546 505,548"/>
<path d="M504,531 Q507,542 508,555"/>
</g>
<g stroke="#4E4A3C" stroke-width="1" stroke-dasharray="1 2" fill="none">
<path d="M450,495 Q463,491 476,479"/><path d="M466,500 Q477,491 479,478"/><path d="M471,503 Q485,495 489,483"/>
<path d="M460,530 Q468,527 476,520"/><path d="M473,538 Q483,533 489,522"/><path d="M486,541 Q495,546 505,548"/>
</g>
<g fill="#E8C8D8"><ellipse cx="466" cy="523" rx="3" ry="2.5"/><ellipse cx="473" cy="526" rx="2.5" ry="2.5"/><ellipse cx="482.5" cy="528" rx="2" ry="3"/></g>
</g></g>
<rect x="448" y="557" width="6" height="1" fill="#ccc"/>

</svg>
<div class="t tr" style="left:28px;top:110px">Leaves</div>
<div class="t tr" style="left:28px;top:125px">Pods and seed</div>
<div class="t tr" style="left:47px;top:140px">Pod shape</div>
<div class="t tr" style="left:47px;top:155px">Pod transverse section</div>
<div class="t tr" style="left:47px;top:170px">Pod bilocular</div>
<div class="t tr" style="left:47px;top:185px">Pod stipitate</div>
<div class="t tr" style="left:47px;top:200px">Pod hairiness</div>
<div class="t tr" style="left:47px;top:215px">Pod dehiscence</div>
<div class="t tr" style="left:28px;top:426px">Pods and seed</div>
<div class="a" style="left:170px;top:268px;width:38px;height:21px;border:1px solid #7F9DB9;background:#fff"></div>
<div class="t tr" style="left:174px;top:272px">17</div>
<div class="a" style="left:209px;top:272px;width:114px;height:17px;background:#316AC5"></div>
<div class="t tr" style="left:209px;top:275px;color:#fff">Pod length: mm long</div>
<div class="a" style="left:170px;top:479px;width:38px;height:21px;border:1px solid #7F9DB9;background:#fff"></div>
<div class="t tr" style="left:174px;top:483px">17</div>
<div class="a" style="left:209px;top:483px;width:114px;height:17px;background:#808080"></div>
<div class="t tr" style="left:209px;top:486px;color:#000">Pod length: mm long</div>
<div class="t tr" style="left:547px;top:155px">Aenictophyton reconditum</div>
<div class="t tr" style="left:547px;top:259px">Aeschynomene brevifolia</div>
<div class="t tr" style="left:547px;top:405px">Abrus precatorius</div>
<div class="t tr" style="left:547px;top:509px">Aeschynomene americana</div>
<div class="a" style="left:5px;top:586px;width:65px;height:22px;background:#fff"></div>
<div class="a" style="left:5px;top:606px;width:66px;height:3px;background:linear-gradient(#FFC73C,#E68B2C);border-radius:0 0 3px 3px"></div>
<svg class="a" style="left:13px;top:591px" width="15" height="14" viewBox="0 0 15 14"><path d="M0.5,1 L14,1 M1.5,1 L1.5,4 L3,5 L14,5 M3,5 L3.5,8 L5,9 L14,9 M4.5,9 L4.5,12 L6,13 L14,13" stroke="#2148E8" stroke-width="1.6" fill="none"/></svg>
<div class="t tab" style="left:32px;top:592px">Trees</div>
<div class="a" style="left:70px;top:586px;width:56px;height:21px;border:1px solid #919B9C;border-top:0;border-radius:0 0 3px 3px;background:linear-gradient(#FFFFFF,#F4F3EE 70%,#E9E7DC)"></div>
<svg class="a" style="left:77px;top:589px" width="15" height="15" viewBox="0 0 15 15"><rect x="0" y="1" width="2" height="13" fill="#2148E8"/><rect x="0" y="1" width="15" height="1.6" fill="#2148E8"/><rect x="2" y="2.6" width="13" height="1.2" fill="#B9C4F0"/><rect x="0" y="5" width="15" height="1.6" fill="#2148E8"/><rect x="2" y="6.6" width="13" height="1.2" fill="#B9C4F0"/><rect x="0" y="9" width="15" height="1.6" fill="#2148E8"/><rect x="2" y="10.6" width="13" height="1.2" fill="#B9C4F0"/><rect x="0" y="12.5" width="15" height="1.6" fill="#2148E8"/><rect x="2" y="14.1" width="13" height="1.2" fill="#B9C4F0"/></svg>
<div class="t tab" style="left:96px;top:590px">Lists</div>
<div class="a" style="left:402px;top:586px;width:65px;height:22px;background:#fff"></div>
<div class="a" style="left:402px;top:606px;width:66px;height:3px;background:linear-gradient(#FFC73C,#E68B2C);border-radius:0 0 3px 3px"></div>
<svg class="a" style="left:410px;top:591px" width="15" height="14" viewBox="0 0 15 14"><path d="M0.5,1 L14,1 M1.5,1 L1.5,4 L3,5 L14,5 M3,5 L3.5,8 L5,9 L14,9 M4.5,9 L4.5,12 L6,13 L14,13" stroke="#2148E8" stroke-width="1.6" fill="none"/></svg>
<div class="t tab" style="left:429px;top:592px">Trees</div>
<div class="a" style="left:467px;top:586px;width:57px;height:21px;border:1px solid #919B9C;border-top:0;border-radius:0 0 3px 3px;background:linear-gradient(#FFFFFF,#F4F3EE 70%,#E9E7DC)"></div>
<svg class="a" style="left:474px;top:589px" width="15" height="15" viewBox="0 0 15 15"><rect x="0" y="1" width="2" height="13" fill="#2148E8"/><rect x="0" y="1" width="15" height="1.6" fill="#2148E8"/><rect x="2" y="2.6" width="13" height="1.2" fill="#B9C4F0"/><rect x="0" y="5" width="15" height="1.6" fill="#2148E8"/><rect x="2" y="6.6" width="13" height="1.2" fill="#B9C4F0"/><rect x="0" y="9" width="15" height="1.6" fill="#2148E8"/><rect x="2" y="10.6" width="13" height="1.2" fill="#B9C4F0"/><rect x="0" y="12.5" width="15" height="1.6" fill="#2148E8"/><rect x="2" y="14.1" width="13" height="1.2" fill="#B9C4F0"/></svg>
<div class="t tab" style="left:494px;top:590px">Lists</div>
<div class="a" style="left:524px;top:586px;width:76px;height:21px;border:1px solid #919B9C;border-top:0;border-radius:0 0 3px 3px;background:linear-gradient(#FFFFFF,#F4F3EE 70%,#E9E7DC)"></div>
<svg class="a" style="left:532px;top:589px" width="17" height="14" viewBox="0 0 17 14"><rect x="0.6" y="0.6" width="3.8" height="2.8" rx=".5" fill="none" stroke="#2148E8" stroke-width="1.2"/><rect x="0.6" y="5.6" width="3.8" height="2.8" rx=".5" fill="none" stroke="#2148E8" stroke-width="1.2"/><rect x="0.6" y="10.6" width="3.8" height="2.8" rx=".5" fill="none" stroke="#2148E8" stroke-width="1.2"/><rect x="6.6" y="0.6" width="3.8" height="2.8" rx=".5" fill="none" stroke="#2148E8" stroke-width="1.2"/><rect x="6.6" y="5.6" width="3.8" height="2.8" rx=".5" fill="none" stroke="#2148E8" stroke-width="1.2"/><rect x="6.6" y="10.6" width="3.8" height="2.8" rx=".5" fill="none" stroke="#2148E8" stroke-width="1.2"/><rect x="12.6" y="0.6" width="3.8" height="2.8" rx=".5" fill="none" stroke="#2148E8" stroke-width="1.2"/><rect x="12.6" y="5.6" width="3.8" height="2.8" rx=".5" fill="none" stroke="#2148E8" stroke-width="1.2"/><rect x="12.6" y="10.6" width="3.8" height="2.8" rx=".5" fill="none" stroke="#2148E8" stroke-width="1.2"/></svg>
<div class="t tab" style="left:556px;top:590px">Images</div>
<!-- status bar -->
<div class="a" style="left:4px;top:609px;width:792px;height:2px;background:#FBFAF6"></div>
<div class="a" style="left:5px;top:612px;width:791px;height:22px;border-left:1px solid #8C8A7E;border-top:1px solid #8C8A7E;border-bottom:1px solid #fff;border-right:2px solid #fff"></div>
<div class="a" style="left:0;top:634px;width:800px;height:2px;background:#0A5AEE"></div>
<div class="a" style="left:0;top:636px;width:800px;height:2px;background:#0028B0"></div>
<div class="a" style="left:796px;top:30px;width:2px;height:606px;background:#0A5AEE"></div>
<div class="a" style="left:798px;top:28px;width:2px;height:610px;background:#0028B0"></div>
<div class="a" style="left:0;top:30px;width:1px;height:608px;background:#0030B8"></div>
<div class="t stat" style="left:8px;top:616px">Pods and seed/Pod length: mm long</div>
</body></html>
